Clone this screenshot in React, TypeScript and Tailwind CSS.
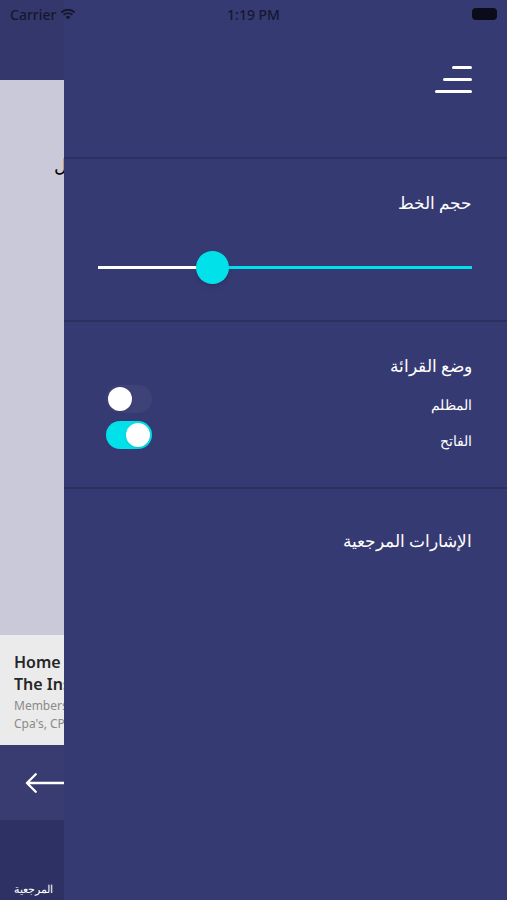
import React from "react";

const font = { fontFamily: '"Noto Sans", "Liberation Sans", sans-serif' };

function StatusBar() {
  return (
    <div className="absolute left-0 top-0 w-full h-[28px] flex items-center justify-between px-[10px] text-[#15172e] text-[14px] font-medium">
      <div className="flex items-center gap-[4px]">
        <span>Carrier</span>
        <svg width="16" height="12" viewBox="0 0 16 12">
          <path d="M8 11.5 L5.6 8.9 A3.4 3.4 0 0 1 10.4 8.9 Z" fill="#15172e" />
          <path d="M3.6 6.9 A6.2 6.2 0 0 1 12.4 6.9" stroke="#15172e" strokeWidth="1.8" fill="none" />
          <path d="M1.3 4.5 A9.5 9.5 0 0 1 14.7 4.5" stroke="#15172e" strokeWidth="1.8" fill="none" />
        </svg>
      </div>
      <span className="absolute left-1/2 -translate-x-1/2">1:19 PM</span>
      <div className="w-[25px] h-[12px] rounded-[4px] bg-[#0b0c1a]" />
    </div>
  );
}

function Toggle({ on }: { on: boolean }) {
  return (
    <div
      dir="ltr"
      className={`w-[46px] h-[28px] rounded-full flex items-center px-[2px] ${
        on ? "bg-[#00e1ea] justify-end" : "bg-[#3e4277] justify-start"
      }`}
    >
      <div className="w-[24px] h-[24px] rounded-full bg-white shadow" />
    </div>
  );
}

export default function App() {
  return (
    <div className="relative w-[507px] h-[900px] flex overflow-hidden" style={font}>
      {/* page behind the drawer */}
      <div className="w-[64px] shrink-0 flex flex-col overflow-hidden">
        <div className="h-[80px] bg-[#33376c]" />
        <div className="h-[555px] bg-[#c9c9da] relative">
          <span className="absolute left-[54px] top-[72px] text-[18px] text-black">ل</span>
        </div>
        <div className="h-[110px] bg-[#ebebeb] pl-[14px] pt-[16px] whitespace-nowrap">
          <div className="text-[16px] font-semibold text-[#262626] leading-[22px]">Home</div>
          <div className="text-[16px] font-semibold text-[#262626] leading-[22px]">The Ins</div>
          <div className="text-[12px] text-[#8a8a8a] leading-[18px] mt-[2px]">Members</div>
          <div className="text-[12px] text-[#8a8a8a] leading-[18px]">Cpa's, CPAs</div>
        </div>
        <div className="h-[75px] bg-[#393c70] flex items-center pl-[25px]">
          <svg width="40" height="22" viewBox="0 0 40 22">
            <path d="M40 11 H3 M11 2 L2 11 L11 20" stroke="#fff" strokeWidth="2.4" fill="none" strokeLinecap="round" strokeLinejoin="round" />
          </svg>
        </div>
        <div className="flex-1 bg-[#2e3163] flex items-end pb-[3px] pl-[14px]">
          <span className="text-[11px] text-white whitespace-nowrap" dir="rtl">المرجعية</span>
        </div>
      </div>

      {/* drawer */}
      <div className="flex-1 bg-[#363a72] flex flex-col text-white" dir="rtl">
        <div className="h-[157px] flex items-start pr-[35px] pt-[66px]">
          <div className="flex flex-col items-start gap-[9px]">
            <div className="w-[20px] h-[3px] bg-white rounded-full" />
            <div className="w-[29px] h-[3px] bg-white rounded-full" />
            <div className="w-[37px] h-[3px] bg-white rounded-full" />
          </div>
        </div>
        <div className="h-[2px] bg-[#2c2f5f]" />

        <div className="h-[161px] pr-[35px] pl-[34px] pt-[30px]">
          <div className="text-[17px] leading-[28px]">حجم الخط</div>
          <div className="relative mt-[33px] h-[34px] flex items-center" dir="ltr">
            <div className="absolute left-0 w-[114px] h-[3px] bg-white" />
            <div className="absolute left-[114px] right-0 h-[3px] bg-[#00e1ea]" />
            <div className="absolute left-[98px] w-[33px] h-[33px] rounded-full bg-[#00e1ea] shadow-md" />
          </div>
        </div>
        <div className="h-[2px] bg-[#2c2f5f]" />

        <div className="h-[165px] pr-[35px] pl-[42px] pt-[30px]">
          <div className="text-[17px] leading-[28px]">وضع القرائة</div>
          <div className="flex items-center justify-between mt-[1px] h-[36px]">
            <span className="text-[14px] mt-[10px]">المظلم</span>
            <Toggle on={false} />
          </div>
          <div className="flex items-center justify-between h-[36px]">
            <span className="text-[14px] mt-[10px]">الفاتح</span>
            <Toggle on />
          </div>
        </div>
        <div className="h-[2px] bg-[#2c2f5f]" />

        <div className="pr-[35px] pt-[38px] text-[17px] leading-[28px]">الإشارات المرجعية</div>
      </div>

      <StatusBar />
    </div>
  );
}
